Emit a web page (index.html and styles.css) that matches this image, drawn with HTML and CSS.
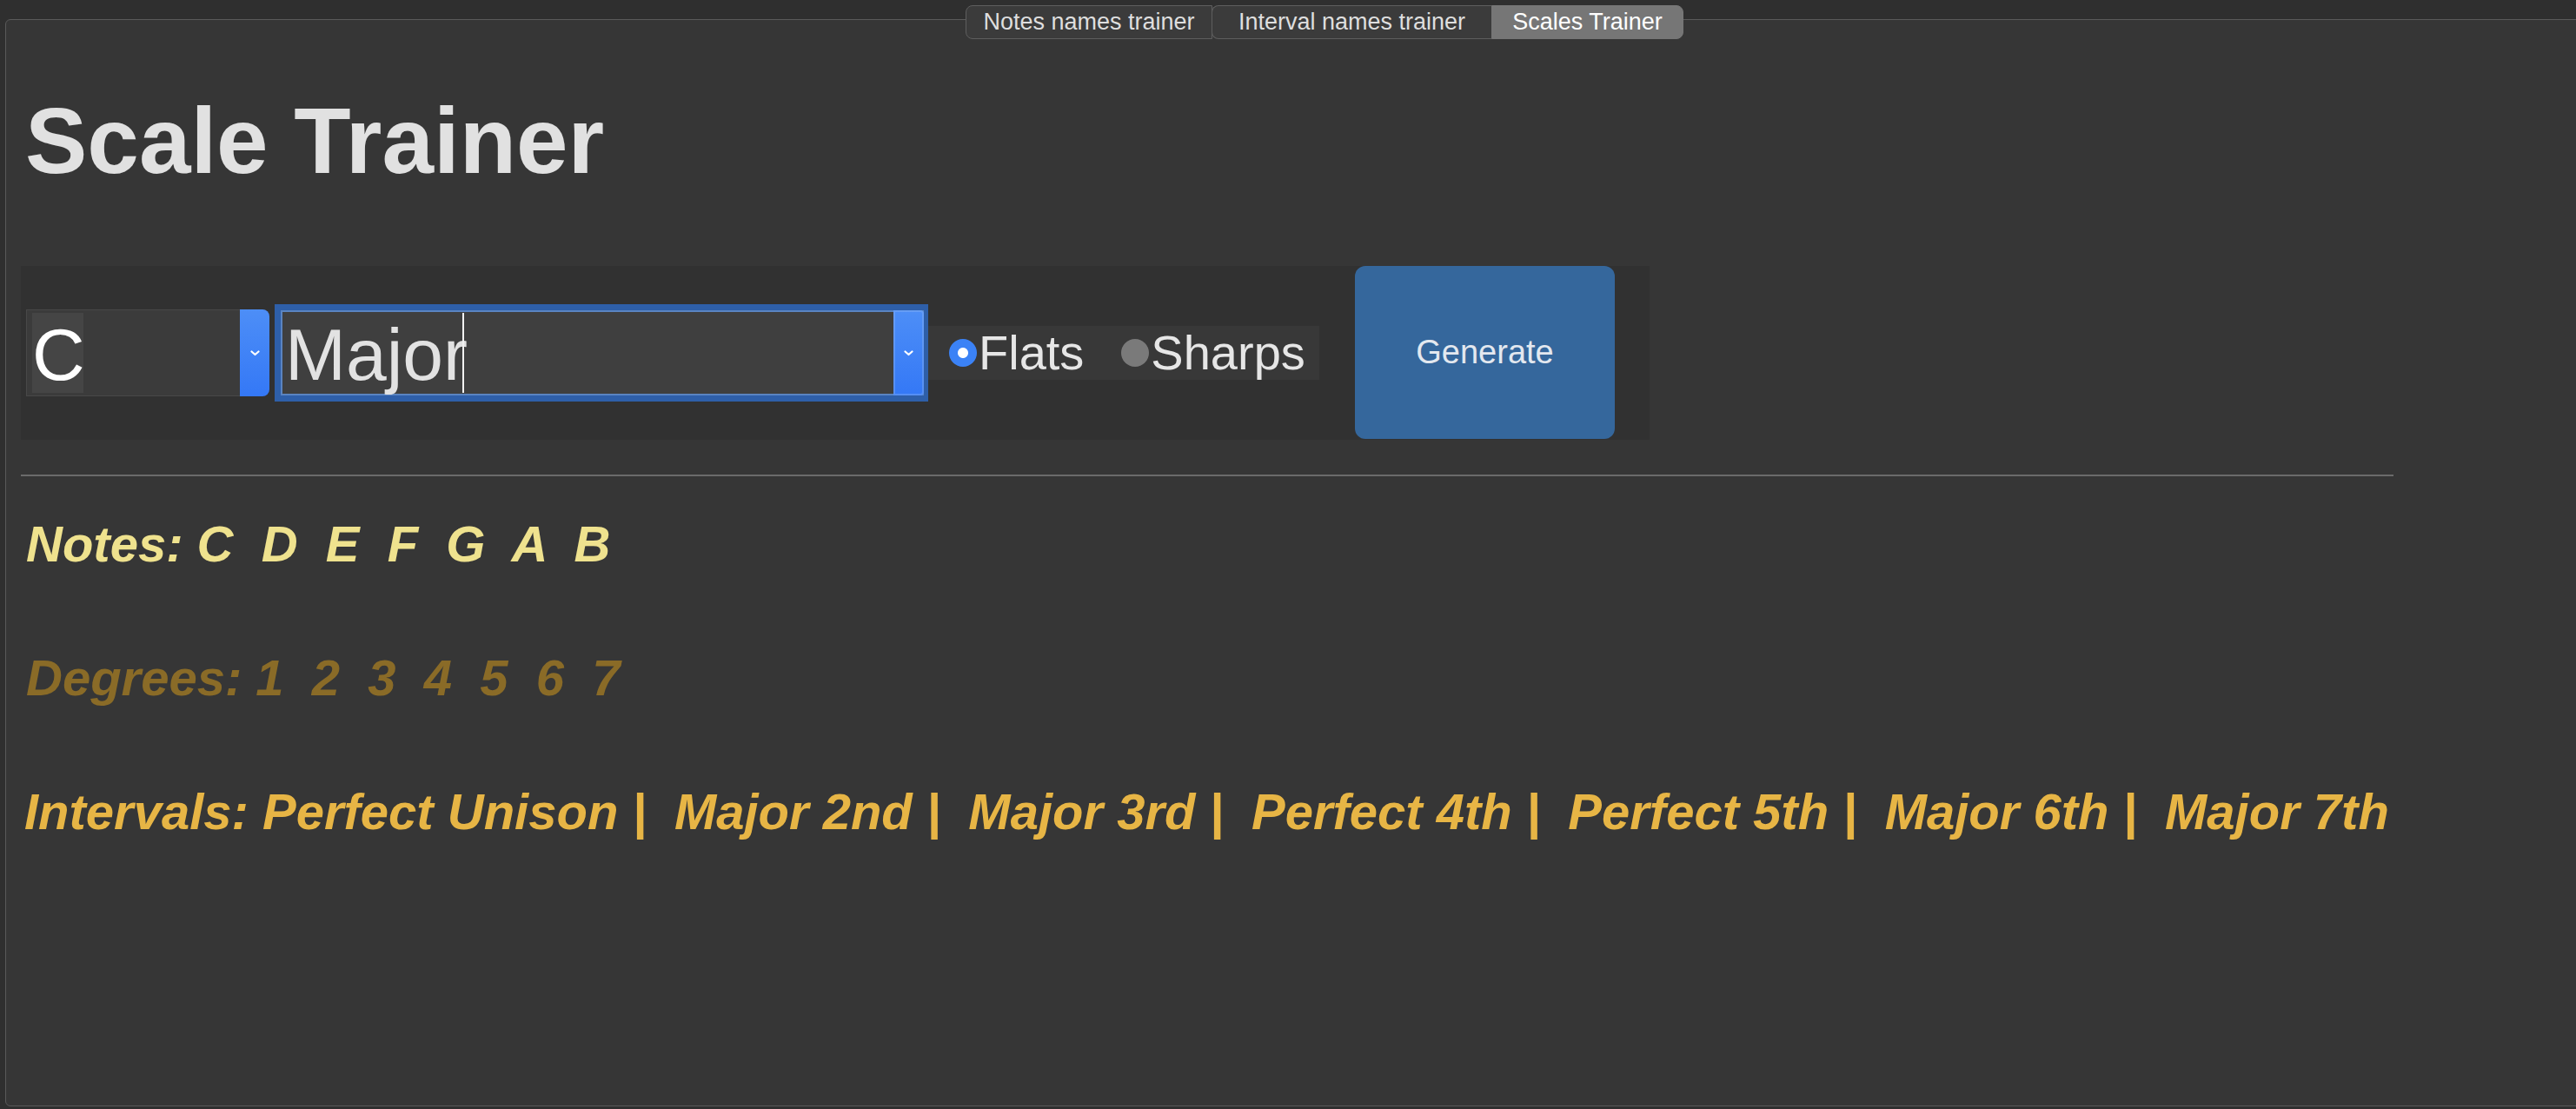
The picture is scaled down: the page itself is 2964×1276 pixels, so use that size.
FILE: index.html
```html
<!DOCTYPE html>
<html lang="en">
<head>
<meta charset="utf-8">
<title>Scale Trainer</title>
<link rel="stylesheet" href="styles.css">
</head>
<body>
<div class="frame">
  <div class="tabbar">
    <div class="tab tab-first"><span>Notes names trainer</span></div>
    <div class="tab tab-mid"><span>Interval names trainer</span></div>
    <div class="tab tab-active"><span>Scales Trainer</span></div>
  </div>
  <div class="content">
    <h1 class="title">Scale Trainer</h1>
    <div class="panel">
      <div class="combo combo-root">
        <div class="combo-field"><span class="combo-sel">C</span></div>
        <div class="combo-btn"><svg width="11" height="7" viewBox="0 0 11 7"><polyline points="1.5,1.5 5.5,5 9.5,1.5" fill="none" stroke="#fff" stroke-width="2.2" stroke-linecap="round" stroke-linejoin="round"/></svg></div>
      </div>
      <div class="focus-ring">
        <div class="combo combo-scale">
          <div class="combo-field"><span class="combo-text">Major</span><span class="caret"></span></div>
          <div class="combo-btn combo-btn-focus"><svg width="11" height="7" viewBox="0 0 11 7"><polyline points="1.5,1.5 5.5,5 9.5,1.5" fill="none" stroke="#fff" stroke-width="2.2" stroke-linecap="round" stroke-linejoin="round"/></svg></div>
        </div>
      </div>
      <div class="radios">
        <label class="radio"><span class="dot dot-on"></span><span class="radio-label">Flats</span></label>
        <label class="radio radio-second"><span class="dot"></span><span class="radio-label">Sharps</span></label>
      </div>
      <button class="generate">Generate</button>
    </div>
    <div class="sep"></div>
    <p class="line notes">Notes: C  D  E  F  G  A  B</p>
    <p class="line degrees">Degrees: 1  2  3  4  5  6  7</p>
    <p class="line intervals">Intervals: Perfect Unison |  Major 2nd |  Major 3rd |  Perfect 4th |  Perfect 5th |  Major 6th |  Major 7th</p>
  </div>
</div>
</body>
</html>
```
FILE: styles.css
```css
html, body {
  margin: 0;
  padding: 0;
  background: #2f2f2f;
  overflow: hidden;
  height: 1276px;
  font-family: "Liberation Sans", Arial, sans-serif;
}

.frame {
  position: relative;
  box-sizing: border-box;
  margin: 22px 0 0 6px;
  width: 3036px;
  height: 1251px;
  border: 1px solid #5a5a5a;
  border-radius: 6px;
  background: #363636;
}

/* Tabs overlay the frame's top border */
.tabbar {
  position: absolute;
  top: -17px;
  left: 0;
  right: 0;
  display: flex;
  justify-content: center;
}

.tab {
  box-sizing: border-box;
  height: 39px;
  display: flex;
  align-items: center;
  justify-content: center;
  border: 1px solid #5e5e5e;
  background: #3b3b3b;
  color: #dedede;
  font-size: 27px;
  line-height: 27px;
}

.tab-first {
  width: 284px;
  border-radius: 8px 0 0 8px;
}

.tab-mid {
  width: 322px;
  border-radius: 8px 0 0 8px;
  margin-left: -1px;
  border-right: none;
}

.tab-active {
  width: 221px;
  border-radius: 0 8px 8px 0;
  background: #767676;
  border-color: #767676;
  color: #ffffff;
}

.content {
  padding: 0 0 0 17px;
}

.title {
  margin: 86px 0 0;
  padding-left: 5px;
  font-weight: bold;
  font-size: 107px;
  line-height: 107px;
  color: #e1e1e1;
}

.panel {
  margin-top: 90px;
  box-sizing: border-box;
  width: 1874px;
  height: 200px;
  padding-left: 6px;
  display: flex;
  align-items: center;
  background: #313131;
}

.combo {
  display: flex;
  box-sizing: border-box;
}

.combo-root {
  width: 280px;
  height: 100px;
}

.combo-root .combo-field {
  flex: 1;
  box-sizing: border-box;
  background: #3b3b3b;
  border: 1px solid #484848;
  border-right: none;
  padding: 3px 0 3px 6px;
}

.combo-sel {
  display: block;
  width: 59px;
  height: 92px;
  line-height: 96px;
  background: #454545;
  color: #ffffff;
  font-size: 84px;
  overflow: visible;
}

.combo-btn {
  width: 34px;
  display: flex;
  align-items: center;
  justify-content: center;
  background: linear-gradient(#4d8ef7, #3478f6);
  border-radius: 0 8px 8px 0;
}

.focus-ring {
  margin-left: 6px;
  box-sizing: border-box;
  width: 752px;
  height: 112px;
  border-style: solid;
  border-color: #2e5fa9;
  border-width: 7px 5px 7px 7px;
}

.combo-scale {
  width: 740px;
  height: 98px;
  border: 2px solid #5a84c1;
  background: #3f3f3f;
}

.combo-scale .combo-field {
  flex: 1;
  display: flex;
  align-items: flex-start;
  padding-left: 3px;
}

.combo-text {
  font-size: 84px;
  line-height: 98px;
  color: #e2e2e2;
}

.caret {
  align-self: center;
  width: 2px;
  height: 92px;
  margin-left: -6px;
  background: #f2f2f2;
}

.combo-btn-focus {
  width: 35px;
  margin: -2px -2px -2px 0;
  border-radius: 0 4px 4px 0;
  box-shadow: inset 0 0 0 2px rgba(150, 185, 240, 0.35);
}

.radios {
  box-sizing: border-box;
  width: 450px;
  height: 62px;
  padding-left: 24px;
  display: flex;
  align-items: center;
  background: #383838;
}

.radio {
  display: flex;
  align-items: center;
}

.radio-second {
  margin-left: 43px;
}

.dot {
  width: 32px;
  height: 32px;
  border-radius: 50%;
  background: #7a7a7a;
  flex: none;
}

.dot-on {
  background: radial-gradient(circle, #ffffff 0, #ffffff 5.5px, #3b82f6 6.5px);
}

.radio-label {
  margin-left: 2px;
  font-size: 56px;
  line-height: 56px;
  color: #e6e6e6;
}

.generate {
  align-self: flex-start;
  margin-left: 41px;
  width: 299px;
  height: 199px;
  border: none;
  border-radius: 12px;
  background: #35679c;
  color: #e3e8ef;
  font-family: "Liberation Sans", Arial, sans-serif;
  font-size: 38px;
  padding: 0;
}

.sep {
  margin-top: 40px;
  width: 2730px;
  height: 2px;
  background: #6b6b6b;
}

.line {
  margin: 96px 0 0;
  padding-left: 6px;
  font-weight: bold;
  font-style: italic;
  font-size: 58px;
  line-height: 58px;
  white-space: pre;
}

.notes {
  margin-top: 49px;
  color: #efe28e;
}

.degrees {
  color: #8a6b27;
}

.intervals {
  padding-left: 4px;
  color: #e7b545;
}
```
